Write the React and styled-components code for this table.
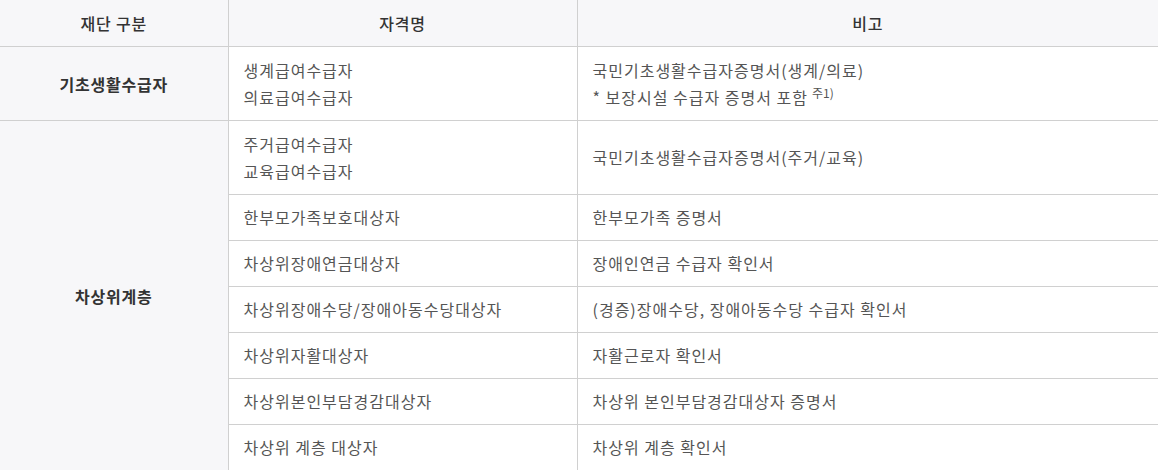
import React from "react";
import styled, { createGlobalStyle } from "styled-components";

const GlobalStyle = createGlobalStyle`
  body {
    margin: 0;
    background: #fff;
    font-family: "Noto Sans CJK KR", "Noto Sans", sans-serif;
  }
`;

const Table = styled.table`
  width: 1158px;
  border-collapse: collapse;
  table-layout: fixed;
  font-size: 16px;
  letter-spacing: 1px;
  color: #555;
`;

const HeadCell = styled.th`
  height: 46px;
  padding: 0;
  background: #f7f7f9;
  color: #333;
  font-weight: 500;
  letter-spacing: 0.8px;
  text-align: center;
  border-bottom: 1px solid #d0d0d0;
  border-left: ${(props) => (props.first ? "none" : "1px solid #d0d0d0")};
`;

const GroupCell = styled.th`
  background: #f7f7f9;
  color: #333;
  font-weight: 700;
  letter-spacing: 0.8px;
  text-align: center;
  border-bottom: ${(props) => (props.open ? "none" : "1px solid #d0d0d0")};
`;

const Cell = styled.td`
  height: ${(props) => (props.tall ? "73px" : "45px")};
  padding: 0 15px;
  line-height: 27px;
  vertical-align: middle;
  border-left: 1px solid #d0d0d0;
  border-bottom: ${(props) => (props.last ? "none" : "1px solid #d0d0d0")};
`;

const Note = styled.sup`
  font-size: 12px;
  letter-spacing: 0;
  margin-left: 4px;
  vertical-align: 6px;
  line-height: 0;
`;

const rows = [
  ["한부모가족보호대상자", "한부모가족 증명서"],
  ["차상위장애연금대상자", "장애인연금 수급자 확인서"],
  ["차상위장애수당/장애아동수당대상자", "(경증)장애수당, 장애아동수당 수급자 확인서"],
  ["차상위자활대상자", "자활근로자 확인서"],
  ["차상위본인부담경감대상자", "차상위 본인부담경감대상자 증명서"],
  ["차상위 계층 대상자", "차상위 계층 확인서"],
];

export default function App() {
  return (
    <>
      <GlobalStyle />
      <Table>
        <colgroup>
          <col style={{ width: 228 }} />
          <col style={{ width: 349 }} />
          <col />
        </colgroup>
        <thead>
          <tr>
            <HeadCell first>재단 구분</HeadCell>
            <HeadCell>자격명</HeadCell>
            <HeadCell>비고</HeadCell>
          </tr>
        </thead>
        <tbody>
          <tr>
            <GroupCell>기초생활수급자</GroupCell>
            <Cell tall>
              생계급여수급자
              <br />
              의료급여수급자
            </Cell>
            <Cell tall>
              국민기초생활수급자증명서(생계/의료)
              <br />* 보장시설 수급자 증명서 포함<Note>주1)</Note>
            </Cell>
          </tr>
          <tr>
            <GroupCell rowSpan={7} open>
              차상위계층
            </GroupCell>
            <Cell tall>
              주거급여수급자
              <br />
              교육급여수급자
            </Cell>
            <Cell tall>국민기초생활수급자증명서(주거/교육)</Cell>
          </tr>
          {rows.map(([name, doc], i) => (
            <tr key={name}>
              <Cell last={i === rows.length - 1}>{name}</Cell>
              <Cell last={i === rows.length - 1}>{doc}</Cell>
            </tr>
          ))}
        </tbody>
      </Table>
    </>
  );
}
